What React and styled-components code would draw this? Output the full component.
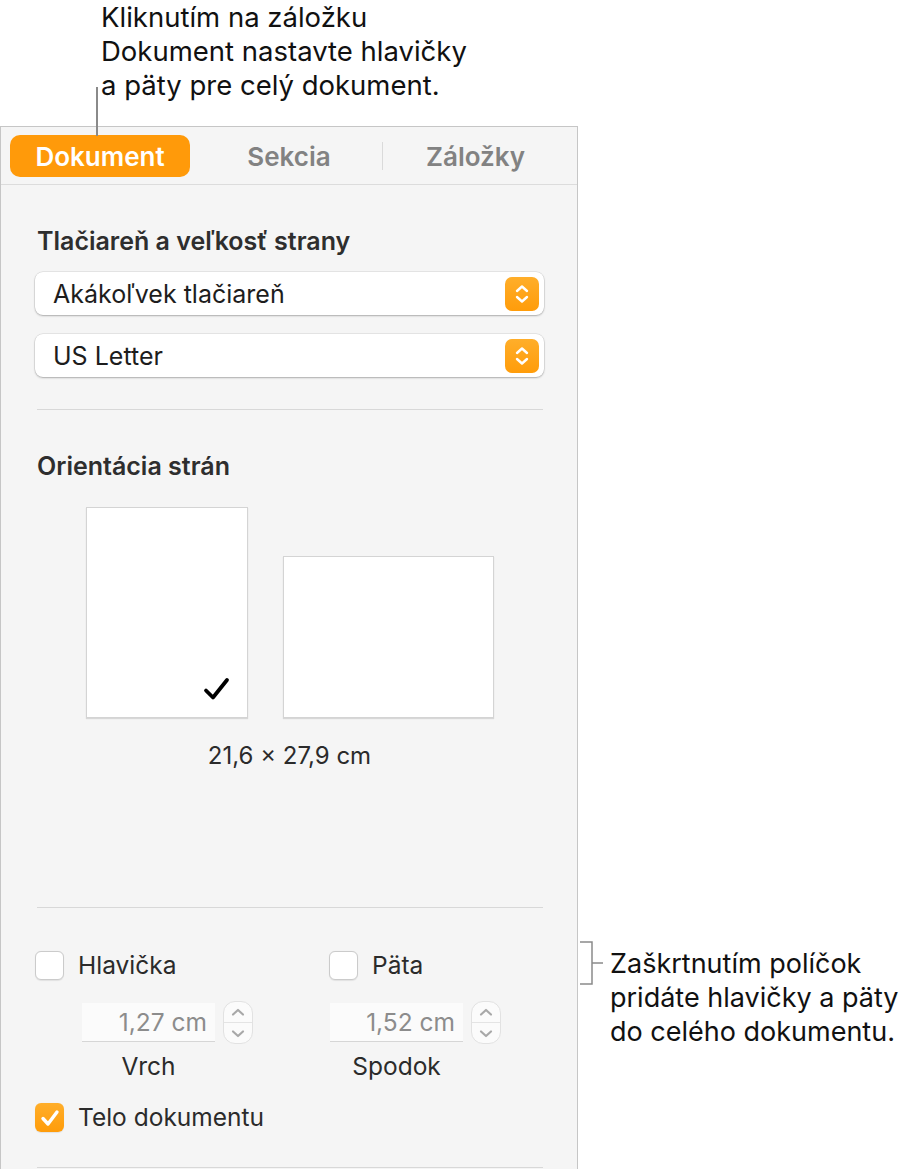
import React from 'react';
import styled, { createGlobalStyle } from 'styled-components';

const GlobalStyle = createGlobalStyle`
  html, body {
    margin: 0;
    padding: 0;
    background: #fff;
    overflow: hidden;
  }
  body {
    font-family: Inter, "Noto Sans", sans-serif;
    color: #1d1d1d;
  }
`;

const Page = styled.div`
  display: flex;
  width: 916px;
  height: 1169px;
  overflow: hidden;
`;

const LeftCol = styled.div`
  width: 578px;
  flex: none;
  display: flex;
  flex-direction: column;
`;

const TopCallout = styled.div`
  position: relative;
  height: 126px;
  flex: none;
  padding-left: 101px;
  box-sizing: border-box;
`;

const CalloutText = styled.p`
  margin: ${p => p.$top || 0}px 0 0;
  font-size: ${p => p.$size || 27}px;
  line-height: 34px;
  color: #111;
  white-space: nowrap;
`;

const Leader = styled.span`
  position: absolute;
  left: 96px;
  top: 87px;
  width: 1.5px;
  height: 49px;
  background: #8a8a8a;
  z-index: 2;
`;

const Panel = styled.section`
  flex: 1;
  background: #f5f5f5;
  border: 1px solid #c6c6c6;
  border-bottom: none;
`;

const TabBar = styled.div`
  display: grid;
  grid-template-columns: repeat(3, 1fr);
  align-items: center;
  padding: 8px 9px 7px;
  border-bottom: 1px solid #dcdcdc;
`;

const Tab = styled.div`
  display: flex;
  align-items: center;
  justify-content: center;
  font-size: 26px;
  font-weight: 600;
  height: ${p => (p.$active ? 42 : 28)}px;
  width: ${p => (p.$active ? '180px' : 'auto')};
  border-radius: ${p => (p.$active ? '10px' : '0')};
  color: ${p => (p.$active ? '#fff' : '#828282')};
  background: ${p => (p.$active ? '#ff9a0a' : 'transparent')};
  border-left: ${p => (p.$sep ? '1px solid #dadada' : 'none')};
`;

const Body = styled.div`
  padding: 0 33px 0 34px;
`;

const Section = styled.div`
  padding-top: 43px;
`;

const Heading = styled.h3`
  margin: 0;
  padding-left: 2px;
  font-size: 25px;
  line-height: 26px;
  font-weight: 600;
  color: #2e2e2e;
`;

const Popup = styled.div`
  margin-top: ${p => p.$gap}px;
  height: 43px;
  box-sizing: border-box;
  display: flex;
  align-items: center;
  justify-content: space-between;
  padding: 0 5px 0 18px;
  background: #fff;
  border-radius: 8px;
  box-shadow: 0 0 0 0.5px rgba(0, 0, 0, 0.12), 0 1px 2px rgba(0, 0, 0, 0.25);
  font-size: 25px;
  color: #1d1d1d;
`;

const PopupArrows = styled.span`
  width: 34px;
  height: 34px;
  border-radius: 7px;
  background: linear-gradient(#ffae2a, #ff9c0a);
  display: flex;
  align-items: center;
  justify-content: center;
`;

const Divider = styled.div`
  height: 1px;
  background: #d8d8d8;
  margin: ${p => p.$gap}px 1px 0 2px;
`;

const PagesRow = styled.div`
  margin-top: 28px;
  display: flex;
  justify-content: center;
  align-items: flex-end;
  gap: 35px;
`;

const PageThumb = styled.div`
  width: ${p => p.$w}px;
  height: ${p => p.$h}px;
  box-sizing: border-box;
  background: #fff;
  border: 1px solid #d4d4d4;
  box-shadow: 0 1px 1px rgba(0, 0, 0, 0.12);
  display: flex;
  align-items: flex-end;
  justify-content: flex-end;
  padding: 0 17px 16px 0;
`;

const Dimensions = styled.div`
  margin-top: 25px;
  text-align: center;
  font-size: 24px;
  line-height: 26px;
  color: #2b2b2b;
`;

const CheckRow = styled.div`
  display: grid;
  grid-template-columns: 294px 1fr;
  margin-top: ${p => p.$gap || 0}px;
`;

const CheckItem = styled.label`
  display: flex;
  align-items: center;
  gap: 14px;
  font-size: 24.5px;
  line-height: 29px;
  color: #2b2b2b;
`;

const Box = styled.span`
  width: 29px;
  height: 29px;
  flex: none;
  box-sizing: border-box;
  border-radius: 6px;
  display: flex;
  align-items: center;
  justify-content: center;
  background: ${p => (p.$checked ? 'linear-gradient(#ffae2a, #ff9c0a)' : '#fff')};
  border: ${p => (p.$checked ? 'none' : '1px solid #cbcbcb')};
  box-shadow: 0 0.5px 1px rgba(0, 0, 0, 0.08);
`;

const FieldsRow = styled.div`
  margin-top: 21px;
  display: flex;
  padding-left: 47px;
  gap: 77px;
`;

const Field = styled.div`
  display: flex;
  flex-direction: column;
`;

const FieldLine = styled.div`
  display: flex;
  align-items: center;
  gap: 8px;
`;

const NumberInput = styled.div`
  width: 133px;
  height: 39px;
  box-sizing: border-box;
  background: #fbfbfb;
  border-bottom: 1px solid #d6d6d6;
  text-align: right;
  padding-right: 8px;
  font-size: 24.5px;
  line-height: 39px;
  color: #8c8c8c;
`;

const Stepper = styled.div`
  width: 30px;
  height: 43px;
  box-sizing: border-box;
  border: 1px solid #e2e2e2;
  border-radius: 12px;
  background: #fbfbfb;
  display: flex;
  flex-direction: column;
`;

const StepHalf = styled.span`
  flex: 1;
  display: flex;
  align-items: center;
  justify-content: center;
  border-top: ${p => (p.$lower ? '1px solid #e4e4e4' : 'none')};
`;

const FieldLabel = styled.div`
  width: 133px;
  margin-top: 9px;
  text-align: center;
  font-size: 24.5px;
  line-height: 26px;
  color: #2b2b2b;
`;

const RightCol = styled.div`
  flex: 1;
  padding: 941px 0 0 2px;
`;

const SideCallout = styled.div`
  display: flex;
  align-items: flex-start;
  gap: 6px;
`;

const Chevrons = () => (
  <svg width="14" height="20" viewBox="0 0 14 20" fill="none" stroke="#fff" strokeWidth="2.4" strokeLinecap="round" strokeLinejoin="round">
    <path d="M2 7 L7 2.5 L12 7" />
    <path d="M2 13 L7 17.5 L12 13" />
  </svg>
);

const StepChevron = ({ down }) => (
  <svg width="14" height="9" viewBox="0 0 14 9" fill="none" stroke="#a8a8a8" strokeWidth="2.2" strokeLinecap="round" strokeLinejoin="round">
    <path d={down ? 'M2 2.5 L7 7 L12 2.5' : 'M2 6.5 L7 2 L12 6.5'} />
  </svg>
);

const NumberField = ({ value, label }) => (
  <Field>
    <FieldLine>
      <NumberInput>{value}</NumberInput>
      <Stepper>
        <StepHalf><StepChevron /></StepHalf>
        <StepHalf $lower><StepChevron down /></StepHalf>
      </Stepper>
    </FieldLine>
    <FieldLabel>{label}</FieldLabel>
  </Field>
);

export default function App() {
  return (
    <Page>
      <GlobalStyle />
      <LeftCol>
        <TopCallout>
          <CalloutText $size={27.5}>
            Kliknutím na záložku<br />
            Dokument nastavte hlavičky<br />
            a päty pre celý dokument.
          </CalloutText>
          <Leader />
        </TopCallout>

        <Panel>
          <TabBar>
            <Tab $active>Dokument</Tab>
            <Tab>Sekcia</Tab>
            <Tab $sep>Záložky</Tab>
          </TabBar>

          <Body>
            <Section>
              <Heading>Tlačiareň a veľkosť strany</Heading>
              <Popup $gap={18}>
                Akákoľvek tlačiareň
                <PopupArrows><Chevrons /></PopupArrows>
              </Popup>
              <Popup $gap={19}>
                US Letter
                <PopupArrows><Chevrons /></PopupArrows>
              </Popup>
              <Divider $gap={32} />
            </Section>

            <Section>
              <Heading>Orientácia strán</Heading>
              <PagesRow>
                <PageThumb $w={162} $h={211}>
                  <svg width="27" height="24" viewBox="0 0 27 24" fill="none" stroke="#000" strokeWidth="3.8" strokeLinecap="round" strokeLinejoin="round">
                    <path d="M3 13.5 L10 20.5 L24 3" />
                  </svg>
                </PageThumb>
                <PageThumb $w={211} $h={162} />
              </PagesRow>
              <Dimensions>21,6 × 27,9 cm</Dimensions>
              <Divider $gap={138} />
            </Section>

            <Section>
              <CheckRow>
                <CheckItem><Box />Hlavička</CheckItem>
                <CheckItem><Box />Päta</CheckItem>
              </CheckRow>
              <FieldsRow>
                <NumberField value="1,27 cm" label="Vrch" />
                <NumberField value="1,52 cm" label="Spodok" />
              </FieldsRow>
              <CheckRow $gap={24}>
                <CheckItem>
                  <Box $checked>
                    <svg width="20" height="18" viewBox="0 0 20 18" fill="none" stroke="#fff" strokeWidth="3.4" strokeLinecap="round" strokeLinejoin="round">
                      <path d="M3 9.5 L8 15 L17 3" />
                    </svg>
                  </Box>
                  Telo dokumentu
                </CheckItem>
              </CheckRow>
              <Divider $gap={35} />
            </Section>
          </Body>
        </Panel>
      </LeftCol>

      <RightCol>
        <SideCallout>
          <svg width="24" height="44" viewBox="0 0 24 44" fill="none" stroke="#8a8a8a" strokeWidth="1.5">
            <path d="M0 1 H12 V43 H0" />
            <path d="M12 22 H23" />
          </svg>
          <CalloutText $top={6}>
            Zaškrtnutím políčok<br />
            pridáte hlavičky a päty<br />
            do celého dokumentu.
          </CalloutText>
        </SideCallout>
      </RightCol>
    </Page>
  );
}
